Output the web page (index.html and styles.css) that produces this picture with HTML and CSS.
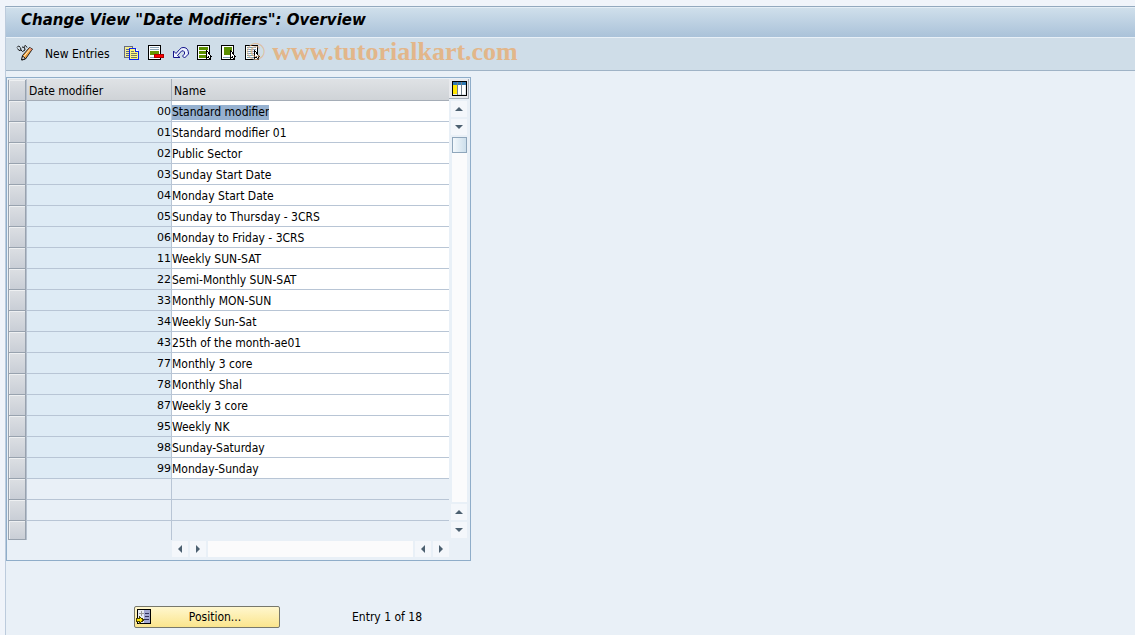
FILE: index.html
```html
<!DOCTYPE html>
<html lang="en">
<head>
<meta charset="utf-8">
<title>Change View "Date Modifiers": Overview</title>
<link rel="stylesheet" href="styles.css">
</head>
<body>
<div class="window">
  <header class="titlebar"><h1>Change View "Date Modifiers": Overview</h1></header>
  <div class="toolbar" role="toolbar" aria-label="Application toolbar">
    <button class="tool tool-edit" aria-label="Display or change">
      <svg width="17" height="16" viewBox="0 0 17 16"><path d="M1 2.500 2.500 1 4 2M1.500 3.500 3 5.500 5 5 4.500 2.500M5 5l1.500 1.500L9 5 8.500 2.500 6 2M8 1.500 9.500.500 11 2.500" fill="none" stroke="#111"/><path d="M6.500 10.500 13.500 2.500l3 1.500L9.500 14l-3.500 1z" fill="#f5a33c" stroke="#222"/><path d="M7.500 12 14.500 3.500" stroke="#fff0cf"/><path d="M5.500 15l1-4 3 2.500z" fill="#fff" stroke="#111"/><path d="M13 4l1-1 2 1-1 2z" fill="#e58b73"/></svg>
    </button>
    <button class="tool tool-text">New Entries</button>
    <button class="tool" aria-label="Copy as">
      <svg width="16" height="16" viewBox="0 0 16 16" shape-rendering="crispEdges"><path d="M.5 1.500h8v11h-8z" fill="#f6ef8c" stroke="#666b80"/><path d="M2 4.500h3M2 6.500h3M2 8.500h3M2 10.500h3" stroke="#55608c"/><path d="M5.500 3.500h6l3 3v8h-9z" fill="#fff57c" stroke="#0b22ee"/><path d="M11.500 3.500v3h3" fill="#fff" stroke="#0b22ee"/><path d="M7 6.500h3M7 8.500h6M7 10.500h6M7 12.500h6" stroke="#777b66"/></svg>
    </button>
    <button class="tool" aria-label="Delete">
      <svg width="17" height="16" viewBox="0 0 17 16" shape-rendering="crispEdges"><path d="M.5.5h12v14H.5z" fill="#fff" stroke="#000"/><path d="M2 2.500h9M2 4.500h9M2 12.500h9" stroke="#8aa5b8"/><path d="M2 6h9v4H2z" fill="#679500"/><path d="M6.500 9.500h9v3h-9z" fill="#f00" stroke="#a00"/></svg>
    </button>
    <button class="tool" aria-label="Undo change">
      <svg width="16" height="16" viewBox="0 0 16 16"><path d="M.5 6v6.500H7L4.500 10.500 8.500 6q2-1 3 1t-2 4l2 2L15.500 9Q15.500 3 11 2.500 8.500 2 6.500 4.500L3 8.500z" fill="#eef3ff" stroke="#14148c"/></svg>
    </button>
    <button class="tool" aria-label="Select all">
      <svg width="16" height="16" viewBox="0 0 16 16" shape-rendering="crispEdges"><path d="M.5.5h12v14H.5z" fill="#fff" stroke="#000"/><path d="M2 2h9v3H2zM2 6h9v3H2zM2 10h9v3H2z" fill="#5b8f00"/><path d="M9.500 5.500v8l2-2 1 3h1v-3h1z" fill="#fff" stroke="#000"/></svg>
    </button>
    <button class="tool" aria-label="Select block">
      <svg width="16" height="16" viewBox="0 0 16 16" shape-rendering="crispEdges"><path d="M.5.5h12v14H.5z" fill="#fff" stroke="#000"/><path d="M3 2h8v8H3z" fill="#5b8f00"/><path d="M2 12.500h7" stroke="#7da0b4"/><path d="M9.500 5.500v8l2-2 1 3h1v-3h1z" fill="#fff" stroke="#000"/></svg>
    </button>
    <button class="tool" aria-label="Deselect all">
      <svg width="16" height="16" viewBox="0 0 16 16" shape-rendering="crispEdges"><path d="M.5.5h12v14H.5z" fill="#fff" stroke="#000"/><path d="M2 2.500h9M2 4.500h9M2 6.500h9M2 8.500h9M2 10.500h7M2 12.500h7" stroke="#7da0b4"/><path d="M9.500 5.500v8l2-2 1 3h1v-3h1z" fill="#fff" stroke="#000"/></svg>
    </button>
    <span class="watermark"><span class="watermark-mark">©</span> www.tutorialkart.com</span>
  </div>
  <main class="content">
    <section class="panel" aria-label="Date modifiers">
      <table class="grid">
        <colgroup><col class="col-select"><col class="col-key"><col></colgroup>
        <thead><tr><th><button class="selector" aria-label="Select all rows"></button></th><th scope="col">Date modifier</th><th scope="col">Name</th></tr></thead>
        <tbody>
          <tr><td><button class="selector" aria-label="Select row 00"></button></td><td class="key">00</td><td class="name"><input class="selected" aria-label="Name 00" value="Standard modifier"></td></tr>
          <tr><td><button class="selector" aria-label="Select row 01"></button></td><td class="key">01</td><td class="name"><input aria-label="Name 01" value="Standard modifier 01"></td></tr>
          <tr><td><button class="selector" aria-label="Select row 02"></button></td><td class="key">02</td><td class="name"><input aria-label="Name 02" value="Public Sector"></td></tr>
          <tr><td><button class="selector" aria-label="Select row 03"></button></td><td class="key">03</td><td class="name"><input aria-label="Name 03" value="Sunday Start Date"></td></tr>
          <tr><td><button class="selector" aria-label="Select row 04"></button></td><td class="key">04</td><td class="name"><input aria-label="Name 04" value="Monday Start Date"></td></tr>
          <tr><td><button class="selector" aria-label="Select row 05"></button></td><td class="key">05</td><td class="name"><input aria-label="Name 05" value="Sunday to Thursday - 3CRS"></td></tr>
          <tr><td><button class="selector" aria-label="Select row 06"></button></td><td class="key">06</td><td class="name"><input aria-label="Name 06" value="Monday to Friday - 3CRS"></td></tr>
          <tr><td><button class="selector" aria-label="Select row 11"></button></td><td class="key">11</td><td class="name"><input aria-label="Name 11" value="Weekly SUN-SAT"></td></tr>
          <tr><td><button class="selector" aria-label="Select row 22"></button></td><td class="key">22</td><td class="name"><input aria-label="Name 22" value="Semi-Monthly SUN-SAT"></td></tr>
          <tr><td><button class="selector" aria-label="Select row 33"></button></td><td class="key">33</td><td class="name"><input aria-label="Name 33" value="Monthly MON-SUN"></td></tr>
          <tr><td><button class="selector" aria-label="Select row 34"></button></td><td class="key">34</td><td class="name"><input aria-label="Name 34" value="Weekly Sun-Sat"></td></tr>
          <tr><td><button class="selector" aria-label="Select row 43"></button></td><td class="key">43</td><td class="name"><input aria-label="Name 43" value="25th of the month-ae01"></td></tr>
          <tr><td><button class="selector" aria-label="Select row 77"></button></td><td class="key">77</td><td class="name"><input aria-label="Name 77" value="Monthly 3 core"></td></tr>
          <tr><td><button class="selector" aria-label="Select row 78"></button></td><td class="key">78</td><td class="name"><input aria-label="Name 78" value="Monthly Shal"></td></tr>
          <tr><td><button class="selector" aria-label="Select row 87"></button></td><td class="key">87</td><td class="name"><input aria-label="Name 87" value="Weekly 3 core"></td></tr>
          <tr><td><button class="selector" aria-label="Select row 95"></button></td><td class="key">95</td><td class="name"><input aria-label="Name 95" value="Weekly NK"></td></tr>
          <tr><td><button class="selector" aria-label="Select row 98"></button></td><td class="key">98</td><td class="name"><input aria-label="Name 98" value="Sunday-Saturday"></td></tr>
          <tr><td><button class="selector" aria-label="Select row 99"></button></td><td class="key">99</td><td class="name"><input aria-label="Name 99" value="Monday-Sunday"></td></tr>
          <tr class="empty"><td><button class="selector" aria-label="Select empty row"></button></td><td></td><td></td></tr>
          <tr class="empty"><td><button class="selector" aria-label="Select empty row"></button></td><td></td><td></td></tr>
          <tr class="empty last"><td><button class="selector" aria-label="Select empty row"></button></td><td></td><td></td></tr>
        </tbody>
      </table>
      <div class="vscroll">
        <button class="config" aria-label="Configure columns">
          <svg width="15" height="15" viewBox="0 0 15 15" shape-rendering="crispEdges"><path d="M0 0h15v15H0z"/><path d="M1 1h13v13H1z" fill="#dfe6ea"/><path d="M1 1h13v3H1z" fill="#2f78b0"/><path d="M1 4h4v9H1z" fill="#ffe600"/><path d="M6 4h3v9H6zM10 4h3v9h-3z" fill="#fff"/><path d="M5.500 1v13M9.500 1v13" stroke="#73818c"/></svg>
        </button>
        <button class="arrow" aria-label="Scroll up"><svg width="8" height="4" viewBox="0 0 8 4"><path d="M0 4 4 0l4 4z"/></svg></button>
        <button class="arrow" aria-label="Page up"><svg width="8" height="4" viewBox="0 0 8 4"><path d="M0 0h8L4 4z"/></svg></button>
        <div class="track"><div class="thumb"></div></div>
        <button class="arrow" aria-label="Page down"><svg width="8" height="4" viewBox="0 0 8 4"><path d="M0 4 4 0l4 4z"/></svg></button>
        <button class="arrow" aria-label="Scroll down"><svg width="8" height="4" viewBox="0 0 8 4"><path d="M0 0h8L4 4z"/></svg></button>
      </div>
      <div class="hscroll">
        <button class="arrow" aria-label="Scroll left"><svg width="4" height="8" viewBox="0 0 4 8"><path d="M4 0v8L0 4z"/></svg></button>
        <button class="arrow" aria-label="Page left"><svg width="4" height="8" viewBox="0 0 4 8"><path d="M0 0v8l4-4z"/></svg></button>
        <div class="track"></div>
        <button class="arrow" aria-label="Page right"><svg width="4" height="8" viewBox="0 0 4 8"><path d="M4 0v8L0 4z"/></svg></button>
        <button class="arrow" aria-label="Scroll right"><svg width="4" height="8" viewBox="0 0 4 8"><path d="M0 0v8l4-4z"/></svg></button>
      </div>
    </section>
    <footer class="footer">
      <button class="position">
        <svg width="16" height="16" viewBox="0 0 16 16" shape-rendering="crispEdges"><path d="M1.500.5h13v14h-13z" fill="#e8ecf4" stroke="#000"/><path d="M8 1h6v13H8z" fill="#a3a8d2"/><path d="M3 4.500h5M5.500 2v5" stroke="#999"/><path d="M9 4.500h4M9 7.500h4M8 10.500h5" stroke="#33335c"/><path d="M.5 9.500h3v-2l4 3.500-4 3.500v-2h-3z" fill="#ffe600" stroke="#4c4300"/></svg>
        <span>Position...</span>
      </button>
      <span>Entry 1 of 18</span>
    </footer>
  </main>
</div>
</body>
</html>
```
FILE: styles.css
```css
* { box-sizing: border-box; }
body {
  margin: 0;
  min-height: 100vh;
  display: flex;
  padding: 6px 0 0 5px;
  background: #f0f4fa;
  color: #000;
  font: 12px/16px "DejaVu Sans Condensed", "Noto Sans", sans-serif;
}
button {
  margin: 0;
  padding: 0;
  border: 0;
  background: none;
  color: inherit;
  font: inherit;
}
svg { display: block; flex: none; }
.window {
  flex: 1;
  border-top: 1px solid #93a9be;
  border-left: 1px solid #bccbdc;
  background: #e9f0f7;
}
.titlebar {
  height: 31px;
  padding: 3px 15px;
  border-top: 1px solid #e4eef6;
  border-bottom: 1px solid #e8f0f7;
  background: linear-gradient(#cfdfeb, #aac2d9);
}
.titlebar h1 {
  margin: 0;
  font: italic bold 15px/18px "DejaVu Sans", sans-serif;
}
.toolbar {
  position: relative;
  display: flex;
  align-items: center;
  gap: 8px;
  height: 33px;
  padding: 0 10px 2px;
  border-bottom: 1px solid #9fb3c6;
  background: #cfdde8;
}
.tool-text { padding: 2px 6px 0 4px; }
.watermark {
  position: absolute;
  left: 240px;
  top: 0;
  color: #e2b68a;
  font: bold 26px/28px "Liberation Serif", serif;
  white-space: nowrap;
  pointer-events: none;
}
.watermark-mark { opacity: 0.8; font-weight: normal; }
.content { padding: 6px 0 0; }
.panel {
  display: grid;
  grid-template-columns: 1fr 20px;
  width: 465px;
  padding: 1px;
  border: 1px solid #8fadc9;
}
.grid {
  width: 100%;
  border-collapse: separate;
  border-spacing: 0;
  table-layout: fixed;
}
.col-select { width: 19px; }
.col-key { width: 145px; }
.grid th, .grid td {
  height: 21px;
  padding: 2px 0 0;
  border-right: 1px solid #b8c5d5;
  border-bottom: 1px solid #b8c5d5;
  text-align: left;
}
.grid th {
  height: 22px;
  padding-left: 2px;
  border-color: #a5adb7;
  background: linear-gradient(#dfe2e5, #cfd3d7);
  font-weight: normal;
}
.grid td:first-child, .grid th:first-child {
  padding: 0;
  border-bottom: 0;
  border-color: #b5c0ce;
}
.grid td:last-child, .grid th:last-child { border-right: 0; }
.grid .last td { height: 19px; border-bottom: 0; }
.selector {
  display: block;
  width: 100%;
  height: 21px;
  border: 1px solid #98a2ae;
  border-top: 0;
  background: linear-gradient(#dcdfe3, #c9ced6);
  box-shadow: inset 1px 1px #eef0f2;
}
.last .selector { height: 19px; }
.grid .key { background: #deebf5; text-align: right; font: 11px/16px "DejaVu Sans", sans-serif; }
.grid .name { background: #fff; }
.name input {
  display: block;
  width: 100%;
  height: 15px;
  margin: 0;
  padding: 0;
  border: 0;
  outline: 0;
  background: none;
  color: #000;
  font: inherit;
}
.name .selected {
  field-sizing: content;
  width: fit-content;
  background: #96b1d0;
}
.vscroll {
  display: flex;
  flex-direction: column;
  align-items: center;
  gap: 2px;
  padding-bottom: 2px;
}
.config {
  display: flex;
  justify-content: flex-end;
  align-items: center;
  width: 20px;
  height: 20px;
  padding-right: 1px;
  border-right: 1px solid #a5adb7;
  border-bottom: 1px solid #a5adb7;
  background: #e8e9ec;
}
.arrow {
  display: flex;
  justify-content: center;
  align-items: center;
  width: 16px;
  height: 16px;
  background: #f4f7fb;
  fill: #4c6070;
}
.track { flex: 1; background: #fbfbfc; }
.vscroll .track { width: 15px; }
.thumb {
  height: 16px;
  border: 1px solid #8fa6bb;
  background: linear-gradient(to right, #f3f8fc, #cddfec);
}
.hscroll {
  grid-column: 1;
  display: flex;
  gap: 2px;
  height: 19px;
  margin-left: 164px;
  padding: 1px 0 2px;
}
.footer {
  display: flex;
  align-items: center;
  gap: 72px;
  padding: 45px 0 0 128px;
}
.position {
  display: flex;
  align-items: center;
  width: 146px;
  height: 22px;
  padding: 0 1px;
  border: 1px solid #77786c;
  border-radius: 2px;
  background: linear-gradient(#fff7ce, #fbe58d);
}
.position span { flex: 1; }
```
